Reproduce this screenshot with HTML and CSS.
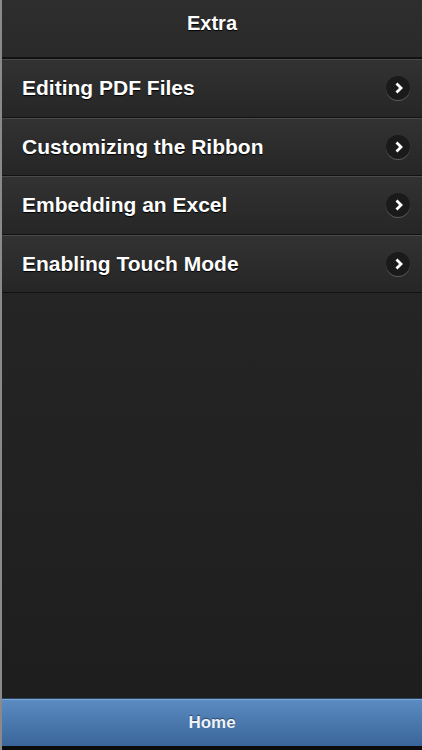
FILE: index.html
```html
<html lang="en">

<head>
  <meta charset="UTF-8">
  <meta name="viewport" content="width=device-width, initial-scale=1.0">
  <title>Extra</title>
  <link rel="stylesheet" href="styles.css">
</head>

<body>
  <div class="page">
    <div class="header">
      <h1>Extra</h1>
    </div>

    <ul class="list">
      <li class="item">
        <span class="label">Editing PDF Files</span>
        <span class="arrow"><svg width="12" height="12" viewBox="0 0 12 12"><path d="M3.5 1.5 L8 6 L3.5 10.5" fill="none" stroke="#fff" stroke-width="2.8"/></svg></span>
      </li>
      <li class="item">
        <span class="label">Customizing the Ribbon</span>
        <span class="arrow"><svg width="12" height="12" viewBox="0 0 12 12"><path d="M3.5 1.5 L8 6 L3.5 10.5" fill="none" stroke="#fff" stroke-width="2.8"/></svg></span>
      </li>
      <li class="item">
        <span class="label">Embedding an Excel</span>
        <span class="arrow"><svg width="12" height="12" viewBox="0 0 12 12"><path d="M3.5 1.5 L8 6 L3.5 10.5" fill="none" stroke="#fff" stroke-width="2.8"/></svg></span>
      </li>
      <li class="item">
        <span class="label">Enabling Touch Mode</span>
        <span class="arrow"><svg width="12" height="12" viewBox="0 0 12 12"><path d="M3.5 1.5 L8 6 L3.5 10.5" fill="none" stroke="#fff" stroke-width="2.8"/></svg></span>
      </li>
    </ul>

    <div class="spacer"></div>

    <div class="footer">
      <span>Home</span>
    </div>
    <div class="bottom-bar"></div>
  </div>
</body>

</html>
```

FILE: styles.css
```css
body {
  margin: 0;
  padding: 0;
  font-family: "Liberation Sans", Arial, sans-serif;
  background-color: #111;
}

.page {
  width: 422px;
  height: 750px;
  display: flex;
  flex-direction: column;
  border-left: 2px solid #8a8a8a;
  box-sizing: border-box;
  background: linear-gradient(#2a2a2a, #1d1d1d);
}

.header {
  height: 57px;
  display: flex;
  align-items: center;
  justify-content: center;
  background: linear-gradient(#2e2e2e, #2a2a2a);
  border-bottom: 2px solid #111;
}

.header h1 {
  margin: 0;
  font-size: 20px;
  font-weight: bold;
  color: #fff;
  text-shadow: 0 1px 1px #000;
  padding-bottom: 10px;
}

.list {
  list-style: none;
  margin: 0;
  padding: 0;
}

.item {
  height: 56.6px;
  display: flex;
  align-items: center;
  justify-content: space-between;
  padding: 0 12px 0 20px;
  background: linear-gradient(#323232, #262626);
  border-top: 1px solid #4a4a4a;
  border-bottom: 1px solid #121212;
}

.label {
  font-size: 21px;
  font-weight: bold;
  color: #fff;
  text-shadow: 0 1px 1px #000;
}

.arrow {
  width: 24px;
  height: 24px;
  border-radius: 50%;
  background: #1a1a1a;
  box-shadow: 0 1px 0 #5a5a5a;
  display: flex;
  align-items: center;
  justify-content: center;
}

.arrow svg {
  margin-left: 1px;
}

.spacer {
  flex: 1;
}

.footer {
  height: 47px;
  display: flex;
  align-items: center;
  justify-content: center;
  background: linear-gradient(#5b8cc2, #3a659a);
  border-top: 1px solid #2a4466;
  box-shadow: inset 0 1px 0 #7aa6d6;
}

.footer span {
  font-size: 17px;
  font-weight: bold;
  color: #eef3f9;
  text-shadow: 0 -1px 1px #2a4466;
}

.bottom-bar {
  height: 4px;
  background: #0c0c0c;
}
```
